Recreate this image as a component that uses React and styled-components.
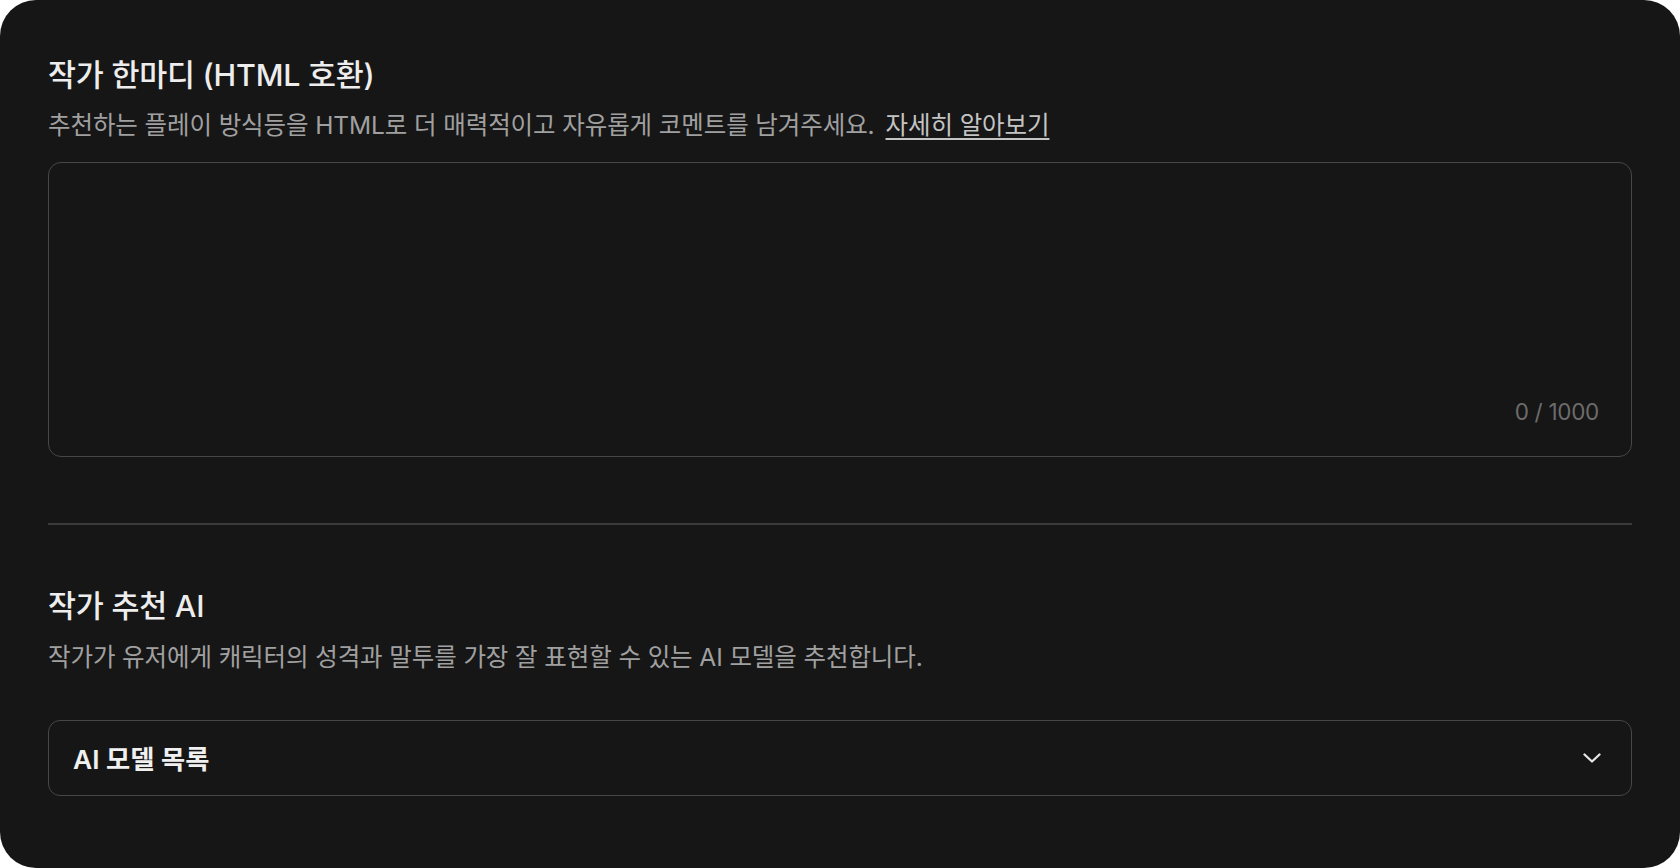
import React, { useState } from 'react'
import styled, { createGlobalStyle } from 'styled-components'

const GlobalStyle = createGlobalStyle`
  html, body {
    margin: 0;
    padding: 0;
    background: #ffffff;
  }
  body {
    font-family: "Inter", "Noto Sans CJK KR", "Noto Sans", sans-serif;
  }
  * {
    box-sizing: border-box;
  }
`

const Card = styled.div`
  width: 1680px;
  height: 868px;
  background: #161616;
  border-radius: 36px;
  padding: 56px 48px 0 48px;
  display: flex;
  flex-direction: column;
  overflow: hidden;
`

const Section = styled.section`
  display: flex;
  flex-direction: column;
`

const Title = styled.h2`
  margin: 0;
  font-size: 30.4px;
  line-height: 39px;
  font-weight: 500;
  color: #ededed;
  letter-spacing: -0.2px;
`

const Description = styled.p`
  margin: ${({ $gap }) => $gap || 15}px 0 0 0;
  font-size: 24.5px;
  line-height: 31px;
  font-weight: 400;
  color: #a0a0a0;
  letter-spacing: -0.1px;
`

const MoreLink = styled.a`
  margin-left: 11px;
  color: #c4c4c4;
  text-decoration: underline;
  text-underline-offset: 4px;
  text-decoration-thickness: 1.5px;
  cursor: pointer;
`

const TextBox = styled.div`
  margin-top: 21px;
  height: 295px;
  border: 1.5px solid #474747;
  border-radius: 13px;
  display: flex;
  flex-direction: column;
  padding: 0 32px 32px 24px;
`

const TextArea = styled.textarea`
  flex: 1;
  background: transparent;
  border: none;
  outline: none;
  resize: none;
  padding: 20px 0 0 0;
  color: #ededed;
  font-family: inherit;
  font-size: 22px;
`

const Counter = styled.span`
  align-self: flex-end;
  font-size: 22.5px;
  line-height: 24px;
  color: #6c6c6c;
  letter-spacing: -0.3px;
`

const Divider = styled.hr`
  margin: 66px 0 62px 0;
  border: none;
  height: 1.5px;
  background: #3a3a3a;
`

const Select = styled.button`
  margin-top: 47px;
  height: 76px;
  width: 100%;
  background: transparent;
  border: 1.5px solid #474747;
  border-radius: 12px;
  padding: 0 30px 0 24px;
  display: flex;
  align-items: center;
  justify-content: space-between;
  font-family: inherit;
  font-size: 26.3px;
  font-weight: 600;
  color: #f0f0f0;
  cursor: pointer;
`

const Chevron = () => (
  <svg width="18" height="10" viewBox="0 0 18 10" fill="none">
    <path d="M1.5 1.5 L9 8.5 L16.5 1.5" stroke="#e6e6e6" strokeWidth="2.3" strokeLinecap="round" strokeLinejoin="round" />
  </svg>
)

const App = () => {
  const [comment, setComment] = useState('')

  return (
    <>
      <GlobalStyle />
      <Card>
        <Section>
          <Title>작가 한마디 (HTML 호환)</Title>
          <Description>
            추천하는 플레이 방식등을 HTML로 더 매력적이고 자유롭게 코멘트를 남겨주세요.
            <MoreLink>자세히 알아보기</MoreLink>
          </Description>
          <TextBox>
            <TextArea
              value={comment}
              maxLength={1000}
              onChange={(e) => setComment(e.target.value)}
            />
            <Counter>{comment.length} / 1000</Counter>
          </TextBox>
        </Section>

        <Divider />

        <Section>
          <Title>작가 추천 AI</Title>
          <Description $gap={16}>
            작가가 유저에게 캐릭터의 성격과 말투를 가장 잘 표현할 수 있는 AI 모델을 추천합니다.
          </Description>
          <Select type="button">
            <span>AI 모델 목록</span>
            <Chevron />
          </Select>
        </Section>
      </Card>
    </>
  )
}

export default App
